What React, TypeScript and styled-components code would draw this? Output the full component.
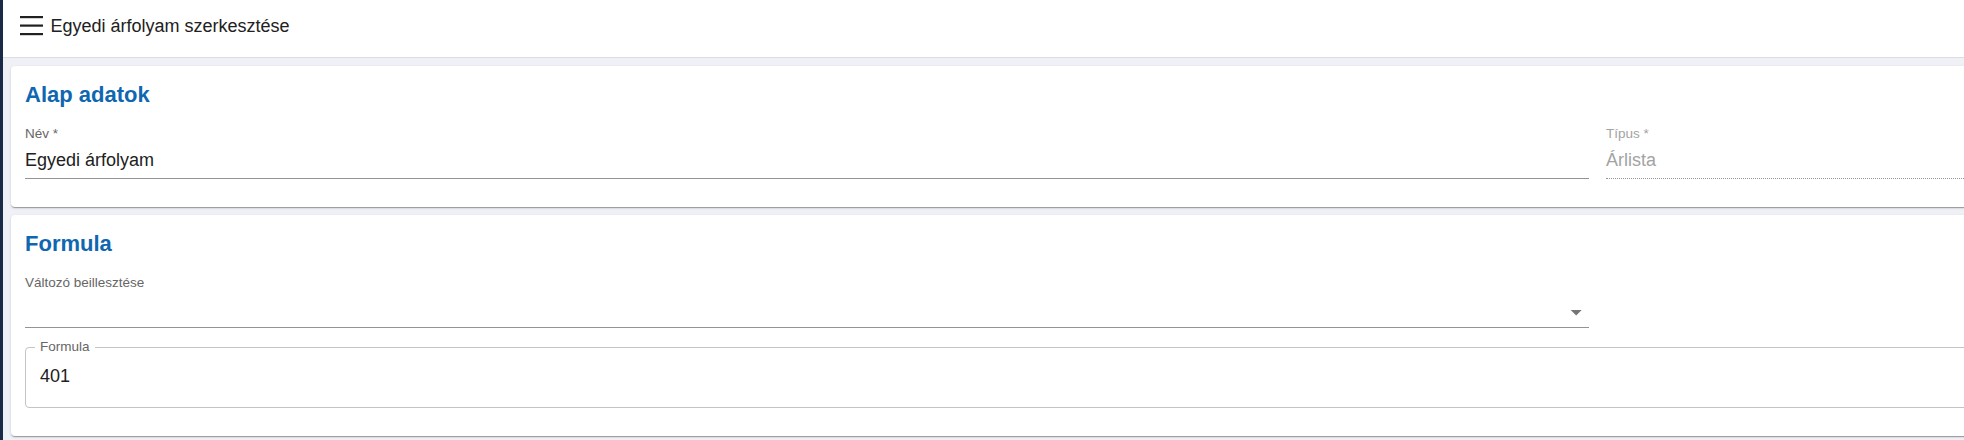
import React from "react";
import styled, { createGlobalStyle } from "styled-components";

const COL = 1564;
const GAP = 17;
const PAD_X = 14;

const Global = createGlobalStyle`
  html, body {
    margin: 0;
    padding: 0;
    overflow: hidden;
    background: #f0f1f6;
  }
  body {
    font-family: "Liberation Sans", Arial, sans-serif;
  }
  * { box-sizing: border-box; }
`;

const Shell = styled.div`
  display: flex;
  width: 1964px;
  height: 440px;
  overflow: hidden;
`;

const Rail = styled.div`
  flex: 0 0 3px;
  background: #1b2a47;
`;

const Main = styled.div`
  flex: 1;
  min-width: 0;
  display: flex;
  flex-direction: column;
`;

const Header = styled.header`
  height: 58px;
  flex: 0 0 58px;
  background: #ffffff;
  border-bottom: 1px solid #dcdde2;
  display: flex;
  align-items: center;
  padding: 0 0 5px 17px;
  gap: 7.5px;
`;

const MenuButton = styled.button`
  border: 0;
  padding: 0;
  margin: 0;
  background: transparent;
  display: flex;
  width: 23px;
  height: 20px;
  color: #212121;
`;

const PageTitle = styled.h1`
  margin: 0;
  font-size: 18px;
  line-height: 23px;
  font-weight: 400;
  color: #212121;
`;

const Content = styled.main`
  padding: 8px;
  display: flex;
  flex-direction: column;
  gap: 8px;
  width: max-content;
`;

const Card = styled.section`
  width: ${COL * 2 + GAP + PAD_X * 2}px;
  background: #ffffff;
  border-radius: 4px;
  box-shadow: 0 2px 1px -1px rgba(0, 0, 0, 0.2), 0 1px 1px 0 rgba(0, 0, 0, 0.14),
    0 1px 3px 0 rgba(0, 0, 0, 0.12);
  padding: 16px ${PAD_X}px 28px;
`;

const CardTitle = styled.h2`
  margin: 0 0 19px;
  font-size: 22px;
  line-height: 25px;
  font-weight: 700;
  color: #0f67b1;
`;

const Row = styled.div`
  display: grid;
  grid-template-columns: ${COL}px ${COL}px;
  column-gap: ${GAP}px;
`;

const Field = styled.div`
  display: flex;
  flex-direction: column;
`;

const FieldLabel = styled.label<{ $disabled?: boolean }>`
  font-size: 13.5px;
  line-height: 16px;
  color: ${(p) => (p.$disabled ? "#a3a3a3" : "#666666")};
`;

const InputLine = styled.div<{ $disabled?: boolean }>`
  margin-top: 7px;
  height: 30px;
  display: flex;
  align-items: center;
  padding-bottom: 6px;
  border-bottom: 1px ${(p) => (p.$disabled ? "dotted" : "solid")} #949494;
`;

const InputText = styled.span<{ $disabled?: boolean }>`
  display: block;
  flex: 1;
  min-height: 23px;
  font-size: 18px;
  line-height: 23px;
  color: ${(p) => (p.$disabled ? "#a3a3a3" : "#212121")};
`;

const SelectIcon = styled.svg`
  width: 26.4px;
  height: 26.4px;
  margin-top: 1px;
  margin-bottom: -4.4px;
  fill: #757575;
  flex: 0 0 auto;
`;

const Outline = styled.fieldset`
  margin: 11px 0 0;
  border: 1px solid #c4c4c4;
  border-radius: 4px;
  padding: 10px 14px 19px;
  min-width: 0;
`;

const Legend = styled.legend`
  margin-left: -5px;
  padding: 0 5px;
  font-size: 13.5px;
  line-height: 16px;
  color: #666666;
`;

const MenuIcon = () => (
  <svg width="23" height="20" viewBox="0 0 23 20" fill="currentColor">
    <rect x="0" y="0" width="23" height="2.2" />
    <rect x="0" y="8.5" width="23" height="2.2" />
    <rect x="0" y="17" width="23" height="2.2" />
  </svg>
);

export default function App() {
  return (
    <>
      <Global />
      <Shell>
        <Rail />
        <Main>
          <Header>
            <MenuButton aria-label="menu">
              <MenuIcon />
            </MenuButton>
            <PageTitle>Egyedi árfolyam szerkesztése</PageTitle>
          </Header>
          <Content>
            <Card>
              <CardTitle>Alap adatok</CardTitle>
              <Row>
                <Field>
                  <FieldLabel>Név *</FieldLabel>
                  <InputLine>
                    <InputText>Egyedi árfolyam</InputText>
                  </InputLine>
                </Field>
                <Field>
                  <FieldLabel $disabled>Típus *</FieldLabel>
                  <InputLine $disabled>
                    <InputText $disabled>Árlista</InputText>
                  </InputLine>
                </Field>
              </Row>
            </Card>
            <Card>
              <CardTitle>Formula</CardTitle>
              <Row>
                <Field>
                  <FieldLabel>Változó beillesztése</FieldLabel>
                  <InputLine>
                    <InputText />
                    <SelectIcon viewBox="0 0 24 24">
                      <path d="M7 10l5 5 5-5z" />
                    </SelectIcon>
                  </InputLine>
                </Field>
              </Row>
              <Outline>
                <Legend>Formula</Legend>
                <InputText>401</InputText>
              </Outline>
            </Card>
          </Content>
        </Main>
      </Shell>
    </>
  );
}
